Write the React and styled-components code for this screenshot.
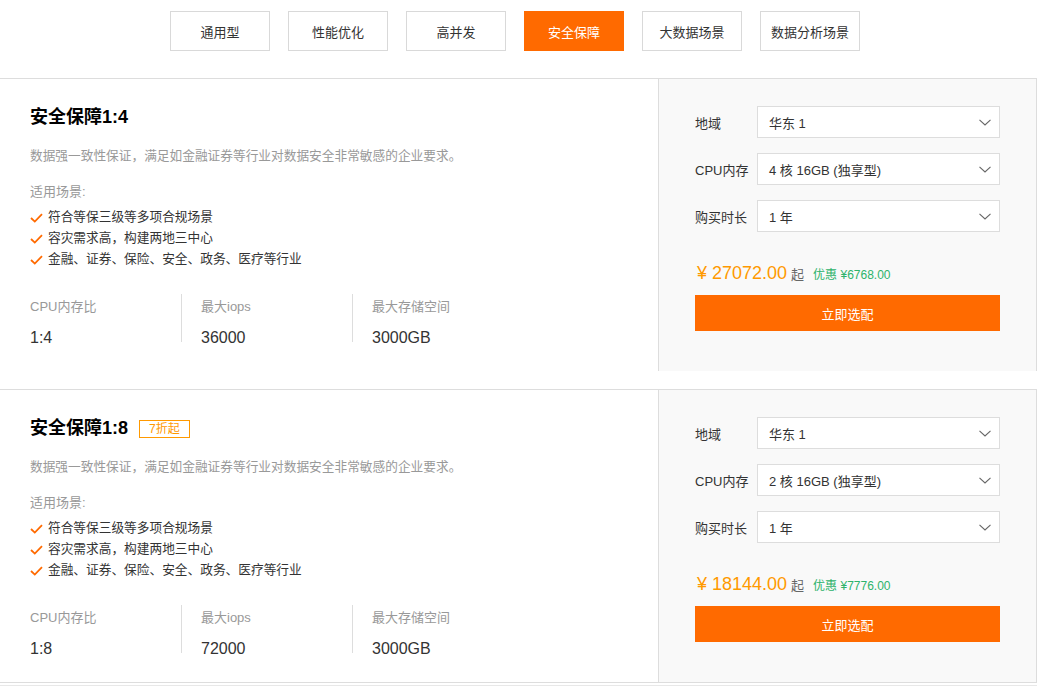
import styled, { createGlobalStyle } from 'styled-components'

const GlobalStyle = createGlobalStyle`
    body {
        margin: 0;
        background: #fff;
        font-family: "Liberation Sans", "Noto Sans CJK SC", sans-serif;
        color: #333;
    }
`;

const tabs = ['通用型', '性能优化', '高并发', '安全保障', '大数据场景', '数据分析场景'];

const plans = [
    {
        title: '安全保障1:4',
        tag: null,
        ratio: '1:4',
        iops: '36000',
        storage: '3000GB',
        cpu: '4 核 16GB (独享型)',
        price: '27072.00',
        discount: '6768.00',
    },
    {
        title: '安全保障1:8',
        tag: '7折起',
        ratio: '1:8',
        iops: '72000',
        storage: '3000GB',
        cpu: '2 核 16GB (独享型)',
        price: '18144.00',
        discount: '7776.00',
    },
];

const scenes = ['符合等保三级等多项合规场景', '容灾需求高，构建两地三中心', '金融、证券、保险、安全、政务、医疗等行业'];

// Small drawings
const Check = () => (
    <svg width="13" height="10" viewBox="0 0 13 10">
        <path d="M1 5 L4.8 8.6 L12 1.2" fill="none" stroke="#ff6a00" strokeWidth="1.8" />
    </svg>
);

const Chevron = () => (
    <svg width="12" height="7" viewBox="0 0 12 7">
        <path d="M0.5 0.8 L6 6 L11.5 0.8" fill="none" stroke="#666" strokeWidth="1.1" />
    </svg>
);

function Select({ value }) {
    return (
        <SelectBox>
            <span>{value}</span>
            <Chevron />
        </SelectBox>
    );
}

function PlanCard({ plan, last }) {
    return (
        <Card $last={last}>
            <Info>
                <TitleRow>
                    <h2>{plan.title}</h2>
                    {plan.tag && <Tag>{plan.tag}</Tag>}
                </TitleRow>
                <Desc>数据强一致性保证，满足如金融证券等行业对数据安全非常敏感的企业要求。</Desc>
                <SceneLabel>适用场景:</SceneLabel>
                <SceneList>
                    {scenes.map(s => (
                        <li key={s}><Check />{s}</li>
                    ))}
                </SceneList>
                <Stats>
                    <Stat>
                        <p className="label">CPU内存比</p>
                        <p className="value">{plan.ratio}</p>
                    </Stat>
                    <Stat>
                        <p className="label">最大iops</p>
                        <p className="value">{plan.iops}</p>
                    </Stat>
                    <Stat>
                        <p className="label">最大存储空间</p>
                        <p className="value">{plan.storage}</p>
                    </Stat>
                </Stats>
            </Info>
            <Panel>
                <Field>
                    <label>地域</label>
                    <Select value="华东 1" />
                </Field>
                <Field>
                    <label>CPU内存</label>
                    <Select value={plan.cpu} />
                </Field>
                <Field>
                    <label>购买时长</label>
                    <Select value="1 年" />
                </Field>
                <Price>
                    <span className="amount">¥ {plan.price}</span>
                    <span className="from">起</span>
                    <span className="save">优惠 ¥{plan.discount}</span>
                </Price>
                <BuyButton>立即选配</BuyButton>
            </Panel>
        </Card>
    );
}

export default function App() {
    return (
        <Page>
            <GlobalStyle />
            <Tabs>
                {tabs.map(t => (
                    <Tab key={t} $active={t === '安全保障'}>{t}</Tab>
                ))}
            </Tabs>
            <List>
                {plans.map((p, i) => (
                    <PlanCard key={p.title} plan={p} last={i === plans.length - 1} />
                ))}
            </List>
        </Page>
    );
}

const Page = styled.div`
    width: 1037px;
`;

const Tabs = styled.div`
    display: flex;
    gap: 18px;
    padding: 11px 0 0 170px;
    margin-bottom: 27px;
`;

const Tab = styled.div`
    box-sizing: border-box;
    width: 100px;
    height: 40px;
    display: flex;
    align-items: center;
    justify-content: center;
    font-size: 13px;
    color: ${p => (p.$active ? '#fff' : '#333')};
    background: ${p => (p.$active ? '#ff6a00' : '#fff')};
    border: 1px solid ${p => (p.$active ? '#ff6a00' : '#d9d9d9')};
`;

const List = styled.div`
    border-bottom: 1px solid #e8e8e8;
    padding-bottom: 2px;
`;

const Card = styled.div`
    display: flex;
    border-top: 1px solid #ddd;
    border-bottom: ${p => (p.$last ? '1px solid #ddd' : 'none')};
    margin-bottom: ${p => (p.$last ? '0' : '18px')};
`;

const Info = styled.div`
    flex: 1;
    padding: 26px 0 0 30px;
`;

const TitleRow = styled.div`
    display: flex;
    align-items: center;
    gap: 11px;

    h2 {
        margin: 0;
        font-size: 18px;
        line-height: 24px;
        font-weight: bold;
        color: #000;
    }
`;

const Tag = styled.span`
    margin-top: 2px;
    padding: 0 9px;
    font-size: 12px;
    line-height: 16px;
    color: #ff9900;
    border: 1px solid #ff9900;
`;

const Desc = styled.p`
    margin: 17px 0 0;
    font-size: 12.7px;
    line-height: 20px;
    color: #999;
`;

const SceneLabel = styled.p`
    margin: 16px 0 0;
    font-size: 13px;
    line-height: 20px;
    color: #999;
`;

const SceneList = styled.ul`
    list-style: none;
    margin: 5px 0 0;
    padding: 0;

    li {
        display: flex;
        align-items: center;
        gap: 5px;
        font-size: 12.7px;
        line-height: 21px;
        color: #333;
    }
`;

const Stats = styled.div`
    display: flex;
    margin-top: 24px;
`;

const Stat = styled.div`
    width: 151px;
    height: 48px;

    & + & {
        border-left: 1px solid #ddd;
        padding-left: 19px;
    }

    p {
        margin: 0;
        line-height: 20px;
    }

    .label {
        margin-top: 3px;
        font-size: 13px;
        color: #999;
    }

    .value {
        margin-top: 11px;
        font-size: 16px;
        color: #333;
    }
`;

const Panel = styled.div`
    width: 306px;
    padding: 27px 35px 40px 36px;
    background: #f9f9f9;
    border-left: 1px solid #ddd;
    border-right: 1px solid #ddd;
    display: flex;
    flex-direction: column;
`;

const Field = styled.div`
    display: flex;
    align-items: center;
    & + & {
        margin-top: 15px;
    }

    label {
        width: 62px;
        font-size: 13px;
        color: #333;
    }
`;

const SelectBox = styled.div`
    box-sizing: border-box;
    width: 243px;
    height: 32px;
    padding: 0 8px 0 11px;
    display: flex;
    align-items: center;
    justify-content: space-between;
    background: #fff;
    border: 1px solid #ddd;
    font-size: 13px;
    color: #333;
`;

const Price = styled.div`
    margin-top: 26px;
    height: 28px;
    display: flex;
    align-items: baseline;
    padding-top: 5px;
    box-sizing: border-box;

    .amount {
        font-size: 18px;
        color: #ff9900;
        margin-left: 2px;
    }

    .from {
        font-size: 13px;
        color: #666;
        margin-left: 4px;
    }

    .save {
        font-size: 12px;
        color: #2db36b;
        margin-left: 9px;
    }
`;

const BuyButton = styled.button`
    margin-top: 9px;
    height: 36px;
    width: 305px;
    border: none;
    background: #ff6a00;
    color: #fff;
    font-family: inherit;
    font-size: 13px;
    cursor: pointer;
`;
